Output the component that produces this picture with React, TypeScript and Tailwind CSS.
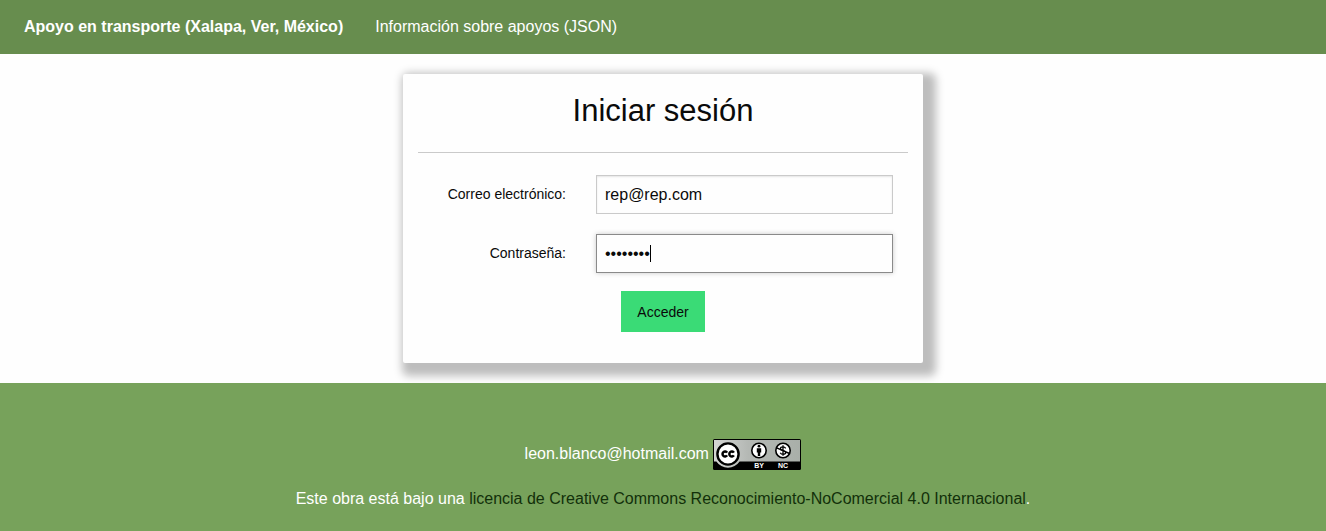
import React from "react";

const labelClass =
  "w-37 shrink-0 text-right text-sm leading-[38px] text-[#0a0a0a]";
const inputClass =
  "h-[39px] w-full border border-[#cacaca] bg-[#fefefe] px-2 text-base text-[#0a0a0a] shadow-[inset_0_1px_2px_rgba(10,10,10,0.1)] outline-none focus:border-[#8a8a8a] focus:shadow-[0_0_5px_#cacaca]";

function LicenseBadge() {
  return (
    <svg
      width="88"
      height="31"
      viewBox="0 0 88 31"
      role="img"
      aria-label="Licencia Creative Commons"
      className="inline-block align-middle"
    >
      <defs>
        <linearGradient id="badge-fill" x1="0" y1="0" x2="1" y2="0">
          <stop offset="0" stopColor="#d4d6d4" />
          <stop offset="0.4" stopColor="#b4b8b4" />
          <stop offset="1" stopColor="#a9afa9" />
        </linearGradient>
      </defs>
      <rect width="88" height="31" rx="1.5" fill="#000" />
      <path d="M1 1h86v21.5H26.6a14 14 0 0 1-23.2 0H1z" fill="url(#badge-fill)" />
      <circle cx="15" cy="15" r="10.6" fill="#fff" stroke="#000" strokeWidth="2.4" />
      <path
        d="M14.1 13.6a2.5 2.5 0 1 0 0 2.8M20.9 13.6a2.5 2.5 0 1 0 0 2.8"
        fill="none"
        stroke="#000"
        strokeWidth="2.5"
      />
      <circle cx="46" cy="11.5" r="7.2" fill="#fff" stroke="#000" strokeWidth="1.6" />
      <circle cx="46" cy="7.2" r="1.4" fill="#000" />
      <path d="M43.8 9.2h4.4v4.2H47.2V17h-2.4v-3.6h-1z" fill="#000" />
      <circle cx="70" cy="11.5" r="7.2" fill="#fff" stroke="#000" strokeWidth="1.6" />
      <path
        d="M72.7 9.3c-.7-1.1-1.6-1.4-2.7-1.4-1.5 0-2.6.7-2.6 1.8 0 2.4 5.4 1.3 5.4 3.8 0 1.1-1.2 1.8-2.7 1.8-1.3 0-2.3-.5-2.9-1.6M70 6.2v10.6"
        fill="none"
        stroke="#000"
        strokeWidth="1.3"
      />
      <path d="M63.7 8.8l12.8 5.7" stroke="#000" strokeWidth="1.4" />
      <text x="46" y="29" fill="#fff" textAnchor="middle" fontSize="7" fontWeight="700">
        BY
      </text>
      <text x="70" y="29" fill="#fff" textAnchor="middle" fontSize="7" fontWeight="700">
        NC
      </text>
    </svg>
  );
}

export default function App() {
  return (
    <div className="flex min-h-screen flex-col bg-[#fefefe] font-['Liberation_Sans',Arial,sans-serif] text-base text-[#0a0a0a]">
      <header className="bg-[#678d4e] px-2 py-2">
        <nav className="flex h-[38px] items-center text-white">
          <a href="#inicio" className="px-4 font-bold">
            Apoyo en transporte (Xalapa, Ver, México)
          </a>
          <a href="#apoyos" className="px-4">
            Información sobre apoyos (JSON)
          </a>
        </nav>
      </header>

      <main className="px-4 py-5">
        <form
          onSubmit={(event) => event.preventDefault()}
          className="mx-auto max-w-[520px] rounded-xs bg-[#fefefe] px-[15px] pt-[15px] pb-[31px] shadow-[6px_6px_8px_7px_#bdbdbd]"
        >
          <h1 className="text-center text-[31px] leading-[43px]">Iniciar sesión</h1>
          <hr className="mt-5 mb-[22px] border-[#cacaca]" />
          <div className="flex flex-col gap-5 pr-[15px]">
            <div className="flex gap-[30px]">
              <label htmlFor="email" className={labelClass}>
                Correo electrónico:
              </label>
              <div className="min-w-0 flex-1">
                <input id="email" type="email" defaultValue="rep@rep.com" className={inputClass} />
              </div>
            </div>
            <div className="flex gap-[30px]">
              <label htmlFor="password" className={labelClass}>
                Contraseña:
              </label>
              <div className="relative min-w-0 flex-1">
                <input
                  id="password"
                  type="password"
                  defaultValue="repartir"
                  autoFocus
                  className={`${inputClass} caret-transparent`}
                />
                <span
                  aria-hidden="true"
                  className="pointer-events-none absolute top-[11px] left-[54px] h-[17px] w-px bg-black"
                />
              </div>
            </div>
          </div>
          <button
            type="submit"
            className="mx-auto mt-[18px] block h-[41px] bg-[#3adb76] px-4 text-sm text-[#0a0a0a]"
          >
            Acceder
          </button>
        </form>
      </main>

      <footer className="flex-1 bg-[#77a25b] px-4 pt-[55px] pb-4 text-center text-white">
        <p className="leading-[31px]">
          leon.blanco@hotmail.com <LicenseBadge />
        </p>
        <p className="mt-[17px] leading-6">
          Este obra está bajo una{" "}
          <a href="https://creativecommons.org/licenses/by-nc/4.0/" className="text-[#12300a]">
            licencia de Creative Commons Reconocimiento-NoComercial 4.0 Internacional
          </a>
          .
        </p>
      </footer>
    </div>
  );
}
